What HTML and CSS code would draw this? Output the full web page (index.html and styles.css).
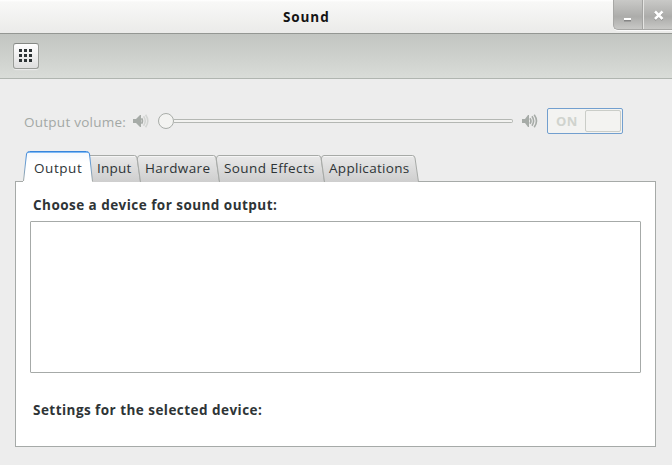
FILE: index.html
```html
<!DOCTYPE html>
<html lang="en">
<head>
<meta charset="utf-8">
<title>Sound</title>
<link rel="stylesheet" href="styles.css">
</head>
<body>
<div class="window">
  <header class="titlebar">
    <h1 class="title"><span>Sound</span></h1>
    <div class="controls">
      <button class="control" aria-label="Minimize"><svg width="28" height="29"><path class="glyph-shadow" d="M10 20.5h7"/><path class="glyph" d="M10 19h7"/></svg></button>
      <button class="control close" aria-label="Close"><svg width="29" height="29"><path class="glyph-shadow" d="M11 12.5l7.5 7.5m0-7.5l-7.5 7.5"/><path class="glyph cross" d="M11 11.5l7.5 7.5m0-7.5l-7.5 7.5"/></svg></button>
    </div>
  </header>
  <nav class="toolbar">
    <button class="all-settings" aria-label="All Settings">
      <svg width="14" height="14"><path d="M0 0h3v3H0zM5 0h3v3H5zM10 0h3v3h-3zM0 5h3v3H0zM5 5h3v3H5zM10 5h3v3h-3zM0 10h3v3H0zM5 10h3v3H5zM10 10h3v3h-3z"/></svg>
    </button>
  </nav>
  <main class="content">
    <div class="volume">
      <label class="volume-label">Output volume:</label>
      <svg class="speaker" width="16" height="16"><path class="body" d="M0 5h3l4-4h1v12H7l-4-4H0z"/><path class="wave" d="M8.6 4.2q1.800 2.800 0 5.600"/><path class="wave faint" d="M10.600 2.300q3.300 4.700 0 9.400M12.600 .7q4.400 6.300 0 12.600"/></svg>
      <div class="slider"><span class="knob"></span><span class="track"></span></div>
      <svg class="speaker high" width="16" height="16"><path class="body" d="M0 5h3l3-4h1v12H6l-3-4H0z"/><path class="wave" d="M8 4.200q2 2.800 0 5.600M10 2.300q3.200 4.700 0 9.400M12.200 .7q4.600 6.300 0 12.600"/></svg>
      <div class="switch"><span class="switch-label">ON</span><span class="switch-handle"></span></div>
    </div>
    <div class="tabs">
      <svg class="gradients" width="0" height="0"><defs><linearGradient id="idle" x1="0" y1="0" x2="0" y2="1"><stop offset="0" stop-color="#e9e9e9"/><stop offset="1" stop-color="#cecece"/></linearGradient><linearGradient id="active" x1="0" y1="0" x2="0" y2="1"><stop offset="0" stop-color="#f4f8fd"/><stop offset=".35" stop-color="#fff"/></linearGradient><linearGradient id="edge" gradientUnits="userSpaceOnUse" x1="0" y1="0" x2="0" y2="30"><stop offset="0" stop-color="#3584dc"/><stop offset=".4" stop-color="#659bd0"/><stop offset="1" stop-color="#a2a7a4"/></linearGradient></defs></svg>
      <div class="tab selected"><svg width="69" height="31"><path fill="url(#active)" d="M0 31V30L3.5 3Q4 .5 6.5 .5H63.500Q66 .5 66.500 3L69.500 31z"/><path stroke="#80baf4" d="M5 1.500h60"/><path fill="none" stroke="url(#edge)" d="M.5 30L3.500 3Q4 .5 6.500 .5H63.500Q66 .5 66.500 3L69.500 30.500"/></svg><span class="tab-label output">Output</span></div>
      <div class="tab"><svg width="48" height="27"><path fill="url(#idle)" d="M-3 .5H42.500Q44.500 .5 45 3L48.500 27H0z"/><path class="shine" d="M-2 1.500H43"/><path class="outline" d="M-3 .5H42.500Q44.500 .5 45 3L48.500 27"/></svg><span class="tab-label input">Input</span></div>
      <div class="tab"><svg width="79" height="27"><path fill="url(#idle)" d="M.5 27L-2.700 4Q-2.500 .5 0 .5H73.500Q75.500 .5 76 3L79.500 27z"/><path class="shine" d="M-1 1.500H74"/><path class="outline" d="M.5 27L-2.700 4Q-2.500 .5 0 .5H73.500Q75.500 .5 76 3L79.500 27"/></svg><span class="tab-label hardware">Hardware</span></div>
      <div class="tab"><svg width="105" height="27"><path fill="url(#idle)" d="M.5 27L-2.700 4Q-2.500 .5 0 .5H99.500Q101.500 .5 102 3L105.500 27z"/><path class="shine" d="M-1 1.500H100"/><path class="outline" d="M.5 27L-2.700 4Q-2.500 .5 0 .5H99.500Q101.500 .5 102 3L105.500 27"/></svg><span class="tab-label effects">Sound Effects</span></div>
      <div class="tab"><svg width="94" height="27"><path fill="url(#idle)" d="M.5 27L-2.700 4Q-2.500 .5 0 .5H88.500Q90.500 .5 91 3L94.500 27z"/><path class="shine" d="M-1 1.500H89"/><path class="outline" d="M.5 27L-2.700 4Q-2.500 .5 0 .5H88.500Q90.500 .5 91 3L94.500 27"/></svg><span class="tab-label applications">Applications</span></div>
    </div>
    <section class="panel">
      <h2 class="heading"><span>Choose a device for sound output:</span></h2>
      <div class="device-list"></div>
      <h2 class="heading"><span>Settings for the selected device:</span></h2>
    </section>
  </main>
</div>
</body>
</html>
```
FILE: styles.css
```css
* { box-sizing: border-box; }
body { margin: 0; font: 13.5px/20px "Open Sans", "Noto Sans", sans-serif; color: #2e3436; }
button { margin: 0; padding: 0; border: 0; background: none; }
svg { display: block; overflow: visible; }
.window { width: 672px; height: 465px; background: #ededed; display: flex; flex-direction: column; }
.titlebar { height: 34px; display: grid; grid-template-columns: 613px 59px; background: linear-gradient(#fff, #f8f8f7 2px, #ebebe9); border-bottom: 1px solid #949793; }
.title { margin: 0; padding: 7px 0 0 283px; font-size: 13.5px; line-height: 20px; font-weight: 700; letter-spacing: .9px; color: #141414; }
.controls { height: 30px; display: flex; border: solid #a7a7a5; border-width: 0 0 1px 1px; border-bottom-left-radius: 5px; background: linear-gradient(#c9c9c7, #acacaa 58%, #c8c8c6); box-shadow: 0 1px #fafafa; overflow: hidden; }
.control { width: 29px; height: 29px; }
.control.close { border-left: 1px solid #e5e5e3; box-shadow: -1px 0 #a4a4a2; }
.glyph, .glyph-shadow { fill: none; stroke: #fff; stroke-width: 2; }
.glyph-shadow { stroke: #858585; }
.cross { stroke-width: 2.5; }
.toolbar { height: 45px; padding: 9px 13px; background: linear-gradient(#c2c5c1, #d9dcd8); border-bottom: 1px solid #b0b5b0; }
.all-settings { display: block; width: 26px; height: 26px; padding: 5px 5px 7px; border: 1px solid #999c98; border-top-color: #858884; border-radius: 3px; background: linear-gradient(#fff, #dedede); box-shadow: 0 1px 1px #eee; fill: #2e3436; }
.content { flex: 1; padding: 29px 16px 18px 15px; }
.volume { height: 27px; display: flex; align-items: flex-start; padding-left: 9px; color: #a3a8a5; }
.volume-label { width: 109px; padding-top: 4px; white-space: nowrap; letter-spacing: .25px; }
.speaker { margin-top: 6px; fill: #a6aba7; }
.wave { fill: none; stroke: #a6aba7; stroke-width: 1.6; }
.faint { stroke: #d3d5d3; }
.slider { width: 356px; height: 16px; margin: 5px 8px 0 9px; display: flex; align-items: center; }
.knob { width: 16px; height: 16px; border: 1px solid #a9ada9; border-radius: 50%; background: #f3f3f1; }
.track { width: 339px; height: 4px; border: 1px solid #b4b7b3; border-left: 0; border-radius: 0 2px 2px 0; background: #f3f3f1; }
.switch { width: 76px; height: 26px; margin-left: 9px; display: flex; border: 1px solid #729fcf; border-radius: 2px; background: #f3f3f1; }
.switch-label { width: 37px; padding: 2px 0 0 8px; font-weight: 700; font-size: 13px; letter-spacing: .3px; color: #d0d3ce; }
.switch-handle { width: 36px; height: 22px; margin-top: 1px; border: 1px solid #cacdc8; border-radius: 2px; }
.tabs { height: 31px; margin-top: 16px; padding-left: 8px; display: flex; align-items: flex-end; }
.gradients { flex: none; width: 0; height: 0; }
.tab { display: grid; }
.tab > * { grid-area: 1 / 1; }
.tab.selected { z-index: 1; }
.tab-label { z-index: 1; width: 0; padding: 3px 0 0 5px; white-space: nowrap; letter-spacing: .4px; }
.tab-label.output { padding: 7px 0 0 11px; letter-spacing: .55px; }
.tab-label.input { letter-spacing: .25px; }
.tab-label.applications { letter-spacing: .3px; }
.outline { fill: none; stroke: #a7aaa7; }
.shine { fill: none; stroke: #f5f5f5; }
.panel { width: 641px; height: 266px; margin-top: -1px; padding: 13px 14px; background: #fff; border: 1px solid #a6aaa8; }
.heading { margin: 0; padding-left: 3px; font-size: 13.5px; line-height: 20px; font-weight: 700; letter-spacing: .46px; white-space: nowrap; }
.device-list { width: 611px; height: 152px; margin: 6px 0 27px; border: 1px solid #a6aaa8; border-radius: 1px; }
```
